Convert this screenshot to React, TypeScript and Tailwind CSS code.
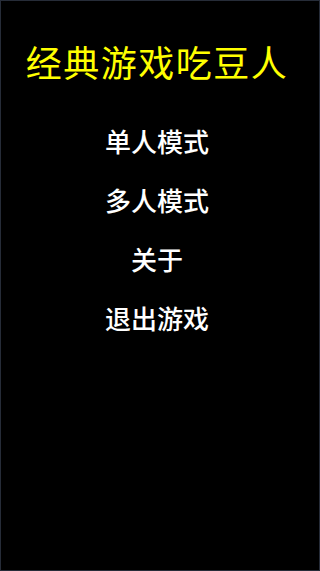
export default function App() {
  return (
    <div
      className="w-[320px] h-[571px] bg-black border border-[#262c38] flex flex-col items-center pr-[6px]"
      style={{ fontFamily: '"Noto Sans CJK SC", "Noto Sans", sans-serif' }}
    >
      <h1 className="mt-[38px] text-[36px] leading-[44px] text-[#ffff00] tracking-[1.5px] font-normal">
        经典游戏吃豆人
      </h1>
      <div className="mt-[28px] flex flex-col items-center text-white text-[26px] font-medium">
        <div className="h-[59px] leading-[59px]">单人模式</div>
        <div className="h-[59px] leading-[59px]">多人模式</div>
        <div className="h-[59px] leading-[59px]">关于</div>
        <div className="h-[59px] leading-[59px]">退出游戏</div>
      </div>
    </div>
  );
}
